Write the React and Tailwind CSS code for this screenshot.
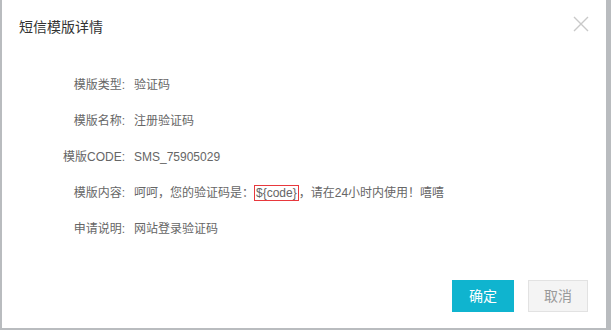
import React from 'react';

const rows = [
  { label: '模版类型:', value: '验证码' },
  { label: '模版名称:', value: '注册验证码' },
  { label: '模版CODE:', value: 'SMS_75905029' },
  {
    label: '模版内容:',
    value: (
      <>
        呵呵，您的验证码是：
        <span className="border border-[#e8383d] px-px">{'${code}'}</span>
        ，请在24小时内使用！嘻嘻
      </>
    ),
  },
  { label: '申请说明:', value: '网站登录验证码' },
];

const App = () => {
  return (
    <div
      className="w-[611px] h-[330px] bg-[#b9bcbf] overflow-hidden"
      style={{ fontFamily: '"Liberation Sans", "Noto Sans CJK SC", sans-serif' }}
    >
      <div className="ml-[2px] w-[604px] h-[328px] bg-white flex flex-col">
        {/* Header */}
        <div className="h-[52px] flex items-center justify-between pl-[17px] pr-[17px]">
          <h1 className="text-[14px] text-[#333] pt-[2px]">短信模版详情</h1>
          <svg width="16" height="16" viewBox="0 0 16 16" className="mt-[-4px]">
            <path d="M1 1L15 15M15 1L1 15" stroke="#c9c9c9" strokeWidth="1.4" />
          </svg>
        </div>

        {/* Body */}
        <div className="mt-[15px] flex flex-col">
          {rows.map((row, i) => (
            <div key={i} className="h-[36px] flex items-center text-[12px] text-[#666]">
              <span className="w-[123px] text-right">{row.label}</span>
              <span className="ml-[9px]">{row.value}</span>
            </div>
          ))}
        </div>

        {/* Footer */}
        <div className="mt-auto mb-[16px] flex justify-end gap-[14px] pr-[18px]">
          <button className="w-[62px] h-[32px] bg-[#0fb4cf] text-white text-[14px]">确定</button>
          <button className="w-[60px] h-[32px] bg-[#f4f4f4] border border-[#e2e2e2] text-[#9a9a9a] text-[14px]">
            取消
          </button>
        </div>
      </div>
    </div>
  );
};

export default App;
